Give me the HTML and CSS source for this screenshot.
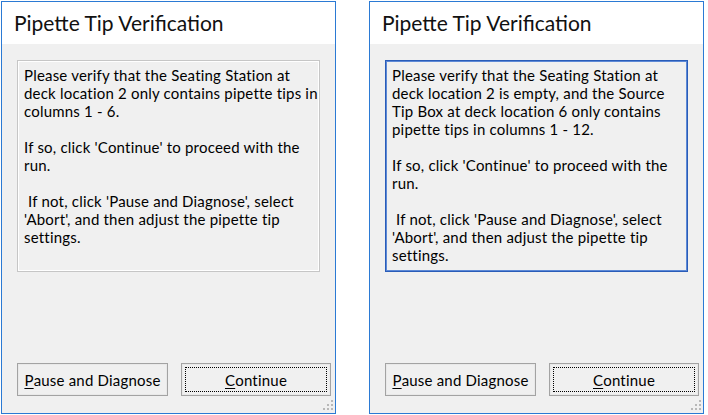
FILE: index.html
```html
<!DOCTYPE html>
<html>
<head>
<meta charset="utf-8">
<link rel="stylesheet" href="styles.css">
</head>
<body>
<div class="desk">
  <div class="win">
    <div class="title">Pipette Tip Verification</div>
    <div class="client">
      <div class="msg">
        <p>Please verify that the Seating Station at<br>deck location 2 only contains pipette tips in<br>columns 1 - 6.</p>
        <p>If so, click 'Continue' to proceed with the<br>run.</p>
        <p>&nbsp;If not, click 'Pause and Diagnose', select<br>'Abort', and then adjust the pipette tip<br>settings.</p>
      </div>
      <div class="buttons">
        <div class="btn"><span class="lbl"><u>P</u>ause and Diagnose</span></div>
        <div class="btn def"><span class="lbl focus"><u>C</u>ontinue</span></div>
      </div>
      <div class="grip"><i></i><i></i><i></i><i></i><i></i><i></i></div>
    </div>
  </div>
  <div class="win">
    <div class="title">Pipette Tip Verification</div>
    <div class="client">
      <div class="msg active">
        <p>Please verify that the Seating Station at<br>deck location 2 is empty, and the Source<br>Tip Box at deck location 6 only contains<br>pipette tips in columns 1 - 12.</p>
        <p>If so, click 'Continue' to proceed with the<br>run.</p>
        <p>&nbsp;If not, click 'Pause and Diagnose', select<br>'Abort', and then adjust the pipette tip<br>settings.</p>
      </div>
      <div class="buttons">
        <div class="btn"><span class="lbl"><u>P</u>ause and Diagnose</span></div>
        <div class="btn def"><span class="lbl focus"><u>C</u>ontinue</span></div>
      </div>
      <div class="grip"><i></i><i></i><i></i><i></i><i></i><i></i></div>
    </div>
  </div>
</div>
</body>
</html>
```
FILE: styles.css
```css
html, body {
  margin: 0;
  padding: 0;
  background: #ffffff;
}
body {
  font-family: Lato, "Noto Sans", sans-serif;
  color: #000;
}
.desk {
  display: flex;
  gap: 33px;
  padding: 1px 0 0 1px;
}
.win {
  width: 333px;
  height: 411px;
  border: 1px solid #2b7ad4;
  display: flex;
  flex-direction: column;
  background: #f0f0f0;
}
.title {
  height: 42px;
  background: #ffffff;
  font-size: 21px;
  line-height: 42px;
  padding-left: 12px;
  color: #111;
}
.client {
  flex: 1;
  position: relative;
  display: flex;
  flex-direction: column;
  padding: 16px 0 0 15px;
}
.msg {
  width: 301px;
  height: 210px;
  border: 1px solid #c6c6c6;
  box-shadow: inset 0 0 0 1px #ffffff;
  font-size: 15px;
  line-height: 18px;
  letter-spacing: 0.2px;
}
.msg.active {
  border-color: #2a5cb8;
  box-shadow: inset 0 0 0 1px #5d89d6;
}
.msg p {
  margin: 0 0 18px 0;
  padding: 0 0 0 6px;
  white-space: nowrap;
}
.msg p:first-child {
  padding-top: 5px;
}
.buttons {
  margin-top: 91px;
  display: flex;
  gap: 13px;
}
.btn {
  border: 1px solid #a3a3a3;
  box-shadow: inset 0 0 0 1px #e9e9e9;
  background: #f0f0f0;
  font-size: 15px;
  letter-spacing: 0.2px;
  display: flex;
  padding: 3px;
  box-sizing: border-box;
  width: 151px;
  height: 33px;
}
.btn.def {
  width: 150px;
}
.lbl {
  flex: 1;
  display: flex;
  align-items: center;
  justify-content: center;
  padding-top: 1px;
}
.focus {
  border: 1px dotted #000;
}
.btn u {
  text-decoration-thickness: 1px;
  text-underline-offset: 2px;
}
.grip {
  position: absolute;
  right: 2px;
  bottom: 2px;
  width: 11px;
  height: 11px;
}
.grip i {
  position: absolute;
  width: 2px;
  height: 2px;
  background: #b8b8b8;
}
.grip i:nth-child(1) { right: 0; top: 0; }
.grip i:nth-child(2) { right: 0; top: 4px; }
.grip i:nth-child(3) { right: 4px; top: 4px; }
.grip i:nth-child(4) { right: 0; top: 8px; }
.grip i:nth-child(5) { right: 4px; top: 8px; }
.grip i:nth-child(6) { right: 8px; top: 8px; }
```
